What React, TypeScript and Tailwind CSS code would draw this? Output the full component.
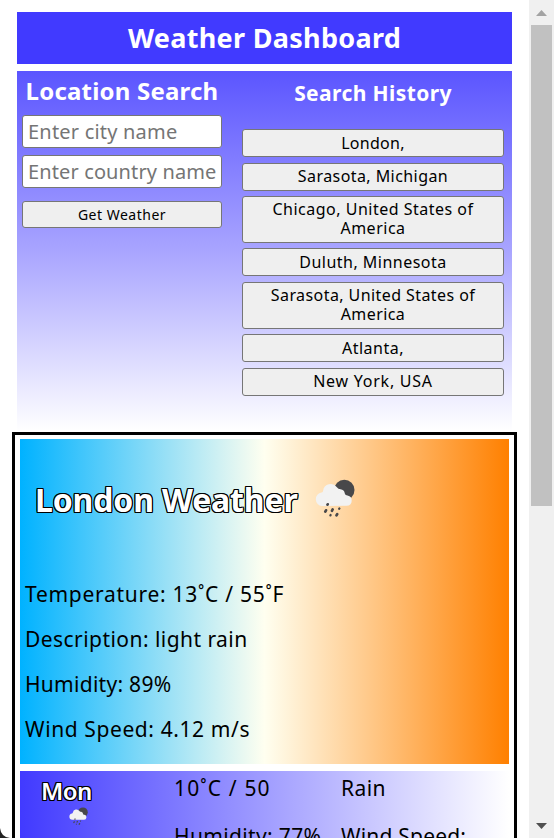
import React from "react";

const outline =
  "text-white [text-shadow:-1px_-1px_0_#000,1px_-1px_0_#000,-1px_1px_0_#000,1px_1px_0_#000,0_1px_0_#000,0_-1px_0_#000,1px_0_0_#000,-1px_0_0_#000]";

const history = [
  { text: "London,", box: "h-7 mb-1.5", track: "tracking-[0.3px]" },
  { text: "Sarasota, Michigan", box: "h-7 mb-[5px] pb-0.5", track: "tracking-[0.43px]" },
  { text: "Chicago, United States of America", box: "h-[47px] mb-[5px] pb-0.5", track: "tracking-[0.5px]" },
  { text: "Duluth, Minnesota", box: "h-7 mb-1.5", track: "tracking-[0.48px]" },
  { text: "Sarasota, United States of America", box: "h-[47px] mb-[5px] pb-0.5", track: "tracking-[0.42px]" },
  { text: "Atlanta,", box: "h-7 mb-1.5", track: "tracking-[0.5px]" },
  { text: "New York, USA", box: "h-7 pb-0.5", track: "tracking-[0.75px]" },
];

function RainIcon({ className }: { className: string }) {
  return (
    <svg viewBox="0 0 40 40" className={className}>
      <circle cx="29.3" cy="11" r="10.2" fill="#48484a" />
      <path
        d="M7 27a6.8 6.8 0 0 1-.4-13.5 2 2 0 0 0 1.500-1.800 7.700 7.700 0 0 1 13.800-3.500q1.300 2 3.600 2a5 5 0 0 1 4.300 4.300q.4 2 2.700 2a5.200 5.200 0 0 1-.8 10.300Z"
        fill="#f2f2f2"
      />
      <g stroke="#48484a" strokeWidth="2.700" strokeLinecap="round">
        <path d="m12.500 25.700.2-.4M10.300 32.600l.7-1.300M17 31.800l.6-1.300M21.500 36.400l.7-1.300" />
        <path d="m15.400 36.400.2-.4M24.200 29.800l.2-.4" strokeWidth="2.200" />
      </g>
    </svg>
  );
}

export default function App() {
  return (
    <div className="flex h-[838px] w-[554px] overflow-hidden bg-white font-['Noto_Sans','Open_Sans',sans-serif] text-black">
      <div className="relative flex w-[529px] shrink-0 flex-col pl-3 pt-3">
        <header className="ml-[5px] h-[52px] w-[495px] shrink-0 bg-[#413aff] text-center">
          <h1 className="text-[27px] leading-[51px] font-bold tracking-[0.3px] text-white">Weather Dashboard</h1>
        </header>

        <section className="mt-[7px] ml-[5px] flex h-[361px] w-[495px] shrink-0 bg-linear-to-b/srgb from-[#5b55ff] via-[#a9a5ff] via-50% to-white pl-[5px]">
          <div className="flex w-[200px] flex-col">
            <h2 className="h-11 text-center text-[24px] leading-[40px] font-bold tracking-[0.2px] whitespace-nowrap text-white">Location Search</h2>
            <input
              placeholder="Enter city name"
              className="h-[33px] w-full rounded-[3px] border border-[#767676] bg-white px-[5px] text-[20px] tracking-[0.2px] placeholder:text-[#757575]"
            />
            <input
              placeholder="Enter country name"
              className="mt-[7px] h-[33px] w-full rounded-[3px] border border-[#767676] bg-white pl-[5px] text-[20px] tracking-[0.12px] placeholder:text-[#757575]"
            />
            <button className="mt-[13px] h-[27px] rounded-[3px] border border-[#767676] bg-[#efefef] text-[14px] leading-[25px] tracking-[0.5px]">
              Get Weather
            </button>
          </div>
          <div className="ml-5 flex w-[262px] flex-col">
            <h3 className="h-[58px] text-center text-[21px] leading-[45px] font-bold tracking-[0.4px] text-white">Search History</h3>
            {history.map((h) => (
              <button
                key={h.text}
                className={`${h.box} ${h.track} flex shrink-0 items-center justify-center rounded-[3px] border border-[#767676] bg-[#efefef] px-1.5 text-[16px] leading-[19px]`}
              >
                {h.text}
              </button>
            ))}
          </div>
        </section>

        <main className="h-[420px] w-[505px] shrink-0 border-[3px] border-black px-[5px] pt-1">
          <section className="h-[325px] bg-linear-to-r/srgb from-[#00b2ff] via-[#fffff0] to-[#ff8000] px-[5px] pt-[38px]">
            <div className="flex h-[95px] items-start pl-[10px]">
              <h2 className={`text-[32px] leading-[45px] font-bold tracking-[-0.15px] whitespace-nowrap ${outline}`}>London Weather</h2>
              <RainIcon className="mt-[2px] ml-[17px] h-10 w-10" />
            </div>
            <div className="text-[21px] leading-[45px] whitespace-nowrap">
              <p className="tracking-[0.72px]">Temperature: 13˚C / 55˚F</p>
              <p className="tracking-[0.45px]">Description: light rain</p>
              <p className="tracking-[0.28px]">Humidity: 89%</p>
              <p className="tracking-[0.6px]">Wind Speed: 4.12 m/s</p>
            </div>
          </section>
          <section className="mt-[7px] flex h-20 bg-linear-to-r/srgb from-[#413aff] to-white text-[21px] whitespace-nowrap">
            <div className="w-[154px] pl-[21px]">
              <h3 className={`h-9 text-[24px] leading-[40px] font-semibold tracking-[-0.6px] ${outline}`}>Mon</h3>
              <RainIcon className="ml-7 h-[19px] w-[19px]" />
            </div>
            <div className="w-[167px] leading-[34px]">
              <p className="mb-[14px] tracking-[1.15px]">10˚C / 50</p>
              <p className="tracking-[0.35px]">Humidity: 77%</p>
            </div>
            <div className="leading-[34px] tracking-[0.2px]">
              <p className="mb-[14px] tracking-[0.4px]">Rain</p>
              <p>Wind Speed:</p>
            </div>
          </section>
        </main>
        <svg viewBox="0 0 12 12" className="absolute top-[826px] left-0 h-3 w-3">
          <path d="M0 2Q1 11 10 12H0Z" fill="#222" />
        </svg>
      </div>

      <aside className="flex w-[25px] shrink-0 flex-col bg-[#f0f0f0]">
        <svg viewBox="0 0 25 25" className="h-[25px] w-[25px] shrink-0">
          <path d="M7 16 12.500 10 18 16Z" fill="#a3a3a3" />
        </svg>
        <div className="ml-[2px] h-[481px] w-[21px] bg-[#c1c1c1]" />
        <svg viewBox="0 0 25 25" className="mt-auto h-[25px] w-[25px] shrink-0">
          <path d="M7 10 12.500 16 18 10Z" fill="#505050" />
        </svg>
      </aside>
    </div>
  );
}
